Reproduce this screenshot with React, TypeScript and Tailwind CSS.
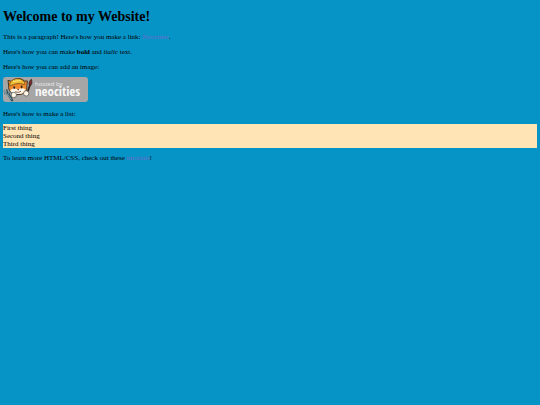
import type { ReactNode } from 'react';

const things = ['First thing', 'Second thing', 'Third thing'];

function TextLink({ href, children }: { href: string; children: ReactNode }) {
  return (
    <a href={href} className="text-[#6e6cc8]">
      {children}
    </a>
  );
}

function NeocitiesBadge() {
  return (
    <svg width="85" height="25" viewBox="0 0 85 25" role="img" aria-label="Hosted by Neocities" className="block">
      <rect width="85" height="25" rx="3" fill="#a6a6a6" />

      {/* fork */}
      <path d="M4.6 16 9 23.2" stroke="#34505e" strokeWidth="2.4" strokeLinecap="round" />
      <path d="M1.2 13 2 16.6 4.8 17.4 7 15.6 6.4 12.4M3.6 12.2 4.8 16.4" fill="none" stroke="#34505e" strokeWidth="1.3" />
      <path d="M1.2 13 2 16.6 4.8 17.4 8.4 22.6M6.4 12.8 6.8 15.4 4.8 16.8" fill="none" stroke="#a4c4d0" strokeWidth="0.7" />

      {/* brush */}
      <path d="M24.2 16 27 8" stroke="#33251f" strokeWidth="1.8" strokeLinecap="round" />
      <path d="M26.2 8C25.6 5.6 26.8 3.4 28.4 2.2 29.2 4.4 29 6.8 27.8 8.4Z" fill="#84262e" stroke="#33251f" strokeWidth="0.8" />

      {/* cat */}
      <path d="M5.6 8.2 5 3.4 9 4.4C12 .8 18.4.6 21.2 4L24.4 4 23.8 9.2C24.6 14 21 17.6 15 17.6 9 17.6 5 14.2 5.6 8.2Z" fill="#f08a2c" stroke="#382a1c" strokeWidth="0.9" />
      <path d="M6.8 7.2C7 1.2 18.8-1 22 6L21.4 7.6C16.6 5.8 11.4 6.4 7.2 9.2Z" fill="#efbd35" stroke="#65441b" strokeWidth="0.7" />
      <path d="M10 4.6 17.6 3.4" stroke="#ffe887" strokeWidth="0.9" />
      <path d="M7.2 13.4C9 11 12.2 11.4 14.8 12.2 17.4 10.8 20.6 10.8 22.6 12.2 21.8 15.8 18.8 17 15 17 11.2 17 8.2 16 7.2 13.4Z" fill="#fff6e8" />
      <ellipse cx="11.2" cy="10.6" rx="0.9" ry="1.4" fill="#30251e" />
      <ellipse cx="18.6" cy="10" rx="0.9" ry="1.4" fill="#30251e" />
      <path d="M14 12.2 16.4 12 15.3 13.4Z" fill="#6b2d22" />
      <path d="M12.4 14.4C14.2 15.8 16.6 15.6 18 14" fill="none" stroke="#573629" strokeWidth="0.8" />

      {/* paws */}
      <circle cx="10.8" cy="18" r="2.7" fill="#fff8e9" stroke="#5c5850" strokeWidth="0.8" />
      <circle cx="23.2" cy="16.4" r="2.7" fill="#fff8e9" stroke="#5c5850" strokeWidth="0.8" />

      <text x="32" y="9" fill="#ececec" fontSize="6" fontFamily="'Open Sans', sans-serif">hosted by</text>
      <text x="32" y="19" fill="#f8f8f8" fontSize="13" fontWeight="300" fontFamily="'Liberation Sans Narrow', 'Open Sans Condensed', sans-serif">neocities</text>
    </svg>
  );
}

export default function App() {
  return (
    <main className="min-h-screen bg-[#0693c6] px-[3px] pt-[9px] font-['Liberation_Serif',serif] text-[7px] leading-[8px] text-black">
      <h1 className="mb-2 text-[14px] font-bold leading-4">Welcome to my Website!</h1>

      <div className="flex flex-col gap-[7px]">
        <p>
          This is a paragraph! Here's how you make a link: <TextLink href="https://neocities.org">Neocities</TextLink>.
        </p>
        <p>
          Here's how you can make <strong>bold</strong> and <em>italic</em> text.
        </p>
        <p>Here's how you can add an image:</p>
      </div>

      <div className="mt-1.5 mb-2">
        <NeocitiesBadge />
      </div>

      <p>Here's how to make a list:</p>
      <ul className="my-1.5 bg-[#ffe4b5]">
        {things.map((thing) => (
          <li key={thing}>{thing}</li>
        ))}
      </ul>

      <p>
        To learn more HTML/CSS, check out these <TextLink href="https://neocities.org/tutorials">tutorials</TextLink>!
      </p>
    </main>
  );
}
